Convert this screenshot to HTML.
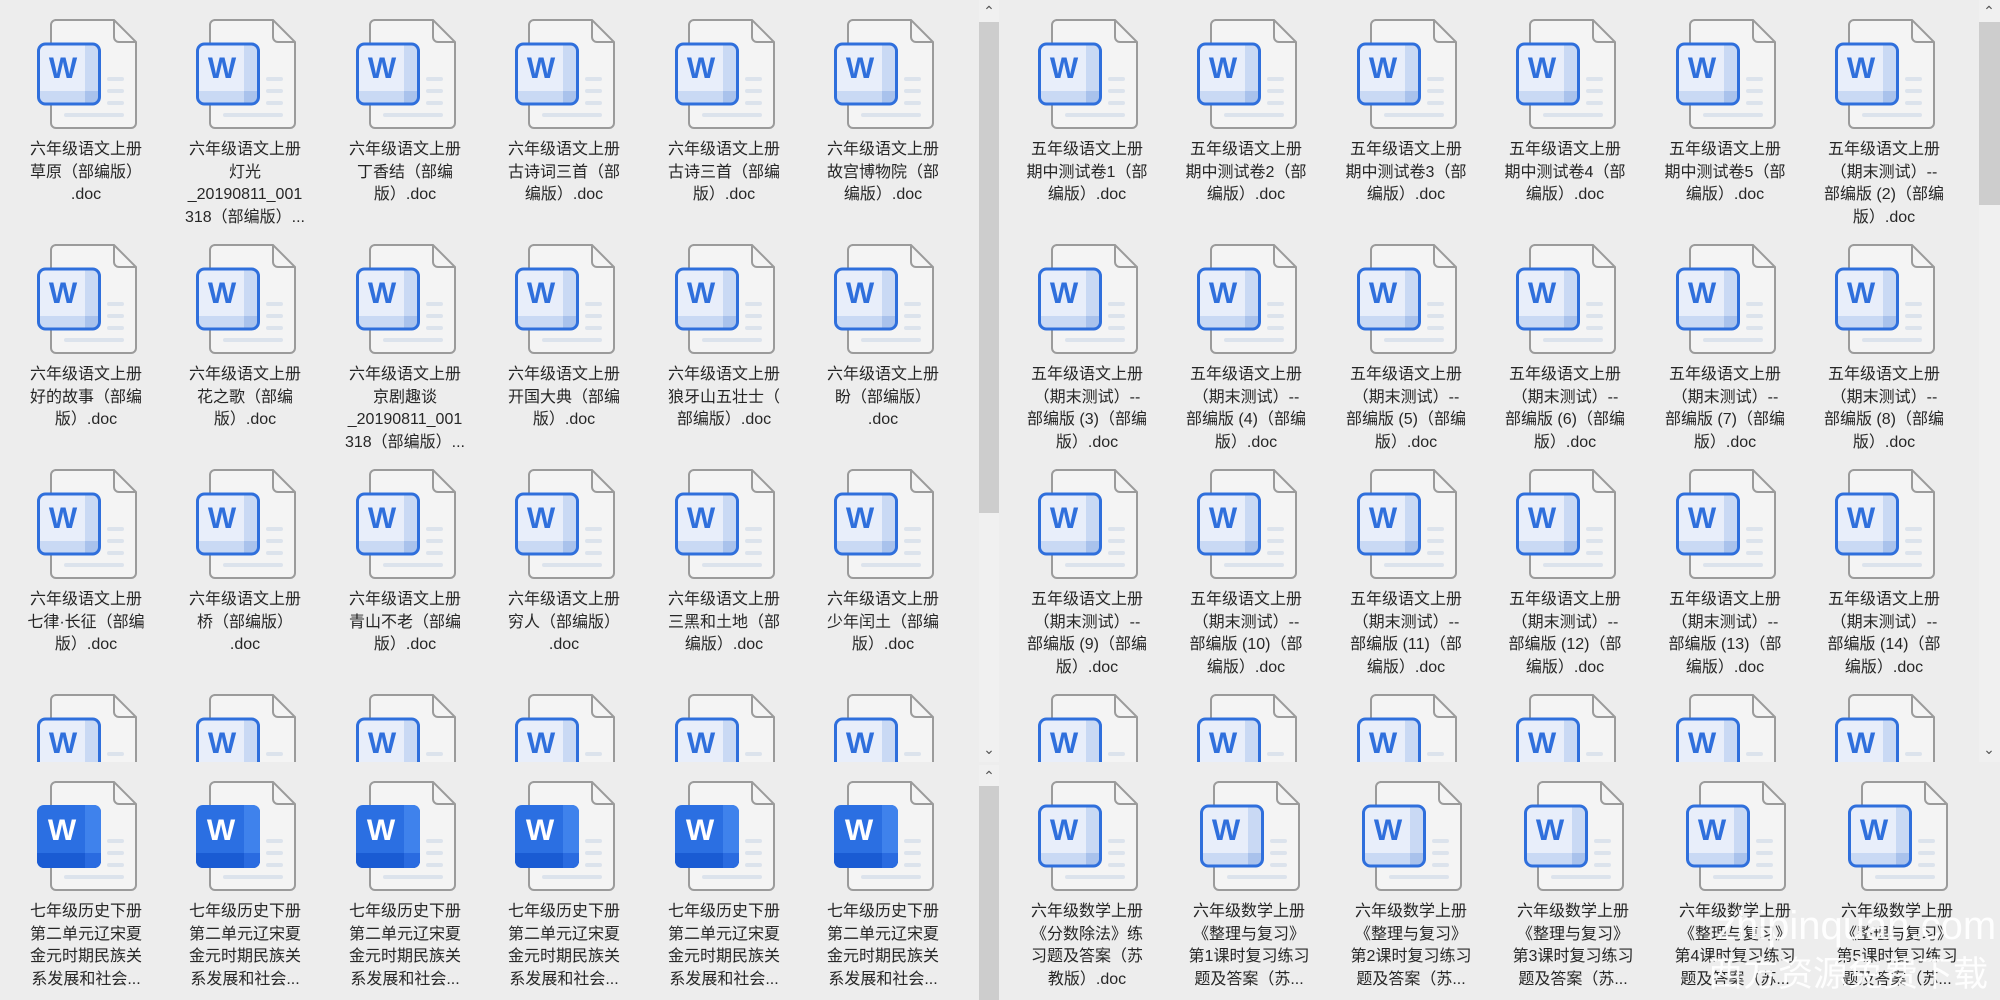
<!DOCTYPE html>
<html><head><meta charset="utf-8">
<style>
*{margin:0;padding:0;box-sizing:border-box}
body{width:2000px;height:1000px;background:#ededed;position:relative;overflow:hidden;font-family:"Liberation Sans","Noto Sans CJK SC",sans-serif}
.pane{position:absolute;overflow:hidden}
.it{position:absolute;width:150px;height:230px}
.it svg{position:absolute;left:26px;top:0;width:100px;height:110px}
.t{position:absolute;left:-5px;top:120px;width:160px;text-align:center;font-size:16px;line-height:22.5px;color:#262626;white-space:nowrap}
.sb{position:absolute;background:#f0f0f0;width:20px}
.th{position:absolute;left:0;width:20px;background:#cdcdcd}
.ar{position:absolute;left:0;width:20px;text-align:center;font-size:14px;color:#555;line-height:14px}
.wm{position:absolute;color:rgba(255,255,255,.9);white-space:nowrap;font-family:"Liberation Sans","Noto Sans CJK SC",sans-serif}
</style></head><body>
<svg width="0" height="0" style="position:absolute">
<defs>
<symbol id="pg" viewBox="0 0 100 110">
<path d="M18 1H77L99 23V104a5 5 0 0 1-5 5H19a5 5 0 0 1-5-5V6a5 5 0 0 1 5-5z" fill="#f4f4f4" stroke="#9b9b9b" stroke-width="2"/>
<path d="M77 1V18a5 5 0 0 0 5 5H99" fill="none" stroke="#9b9b9b" stroke-width="2"/>
<rect x="70" y="58" width="17" height="4" rx="2" fill="#dce3ec"/>
<rect x="70" y="70" width="17" height="4" rx="2" fill="#dce3ec"/>
<rect x="70" y="82" width="17" height="4" rx="2" fill="#dce3ec"/>
<rect x="27" y="94" width="60" height="4" rx="2" fill="#dce3ec"/>
</symbol>
<symbol id="wo" viewBox="0 0 100 110">
<use href="#pg"/>
<rect x="1.5" y="25" width="61" height="60" rx="7" fill="#e8eefa"/>
<path d="M48 26.5H56a5.5 5.5 0 0 1 5.5 5.5V78a5.5 5.5 0 0 1-5.5 5.5H48z" fill="#c9d9f4"/>
<path d="M3 72H61.5V78a5.5 5.5 0 0 1-5.5 5.5H8.5A5.5 5.5 0 0 1 3 78z" fill="#c9d9f4"/>
<path d="M48 72H61.5V78a5.5 5.5 0 0 1-5.5 5.5H48z" fill="#a9c2ec"/>
<rect x="1.5" y="25" width="61" height="60" rx="7" fill="none" stroke="#2f6fdc" stroke-width="3"/>
<text x="26" y="59" text-anchor="middle" font-family="Liberation Sans" font-weight="bold" font-size="30" fill="#2f6fdc">W</text>
</symbol>
<symbol id="wf" viewBox="0 0 100 110">
<use href="#pg"/>
<rect x="0" y="24" width="64" height="63" rx="7" fill="#2b6fe2"/>
<path d="M48 24H57a7 7 0 0 1 7 7V80a7 7 0 0 1-7 7H48z" fill="#3f82ec"/>
<path d="M0 72H64V80a7 7 0 0 1-7 7H7a7 7 0 0 1-7-7z" fill="#1a5bd3"/>
<path d="M48 72H64V80a7 7 0 0 1-7 7H48z" fill="#2a6be0"/>
<text x="25" y="59" text-anchor="middle" font-family="Liberation Sans" font-weight="bold" font-size="30" fill="#fff">W</text>
</symbol>
</defs></svg>

<div class="pane" style="left:0;top:0;width:978px;height:762px">
<div class="it" style="left:11px;top:19px"><svg><use href="#wo"/></svg><div class="t">六年级语文上册<br>草原（部编版）<br>.doc</div></div>
<div class="it" style="left:170px;top:19px"><svg><use href="#wo"/></svg><div class="t">六年级语文上册<br>灯光<br>_20190811_001<br>318（部编版）...</div></div>
<div class="it" style="left:330px;top:19px"><svg><use href="#wo"/></svg><div class="t">六年级语文上册<br>丁香结（部编<br>版）.doc</div></div>
<div class="it" style="left:489px;top:19px"><svg><use href="#wo"/></svg><div class="t">六年级语文上册<br>古诗词三首（部<br>编版）.doc</div></div>
<div class="it" style="left:649px;top:19px"><svg><use href="#wo"/></svg><div class="t">六年级语文上册<br>古诗三首（部编<br>版）.doc</div></div>
<div class="it" style="left:808px;top:19px"><svg><use href="#wo"/></svg><div class="t">六年级语文上册<br>故宫博物院（部<br>编版）.doc</div></div>

<div class="it" style="left:11px;top:244px"><svg><use href="#wo"/></svg><div class="t">六年级语文上册<br>好的故事（部编<br>版）.doc</div></div>
<div class="it" style="left:170px;top:244px"><svg><use href="#wo"/></svg><div class="t">六年级语文上册<br>花之歌（部编<br>版）.doc</div></div>
<div class="it" style="left:330px;top:244px"><svg><use href="#wo"/></svg><div class="t">六年级语文上册<br>京剧趣谈<br>_20190811_001<br>318（部编版）...</div></div>
<div class="it" style="left:489px;top:244px"><svg><use href="#wo"/></svg><div class="t">六年级语文上册<br>开国大典（部编<br>版）.doc</div></div>
<div class="it" style="left:649px;top:244px"><svg><use href="#wo"/></svg><div class="t">六年级语文上册<br>狼牙山五壮士（<br>部编版）.doc</div></div>
<div class="it" style="left:808px;top:244px"><svg><use href="#wo"/></svg><div class="t">六年级语文上册<br>盼（部编版）<br>.doc</div></div>

<div class="it" style="left:11px;top:469px"><svg><use href="#wo"/></svg><div class="t">六年级语文上册<br>七律·长征（部编<br>版）.doc</div></div>
<div class="it" style="left:170px;top:469px"><svg><use href="#wo"/></svg><div class="t">六年级语文上册<br>桥（部编版）<br>.doc</div></div>
<div class="it" style="left:330px;top:469px"><svg><use href="#wo"/></svg><div class="t">六年级语文上册<br>青山不老（部编<br>版）.doc</div></div>
<div class="it" style="left:489px;top:469px"><svg><use href="#wo"/></svg><div class="t">六年级语文上册<br>穷人（部编版）<br>.doc</div></div>
<div class="it" style="left:649px;top:469px"><svg><use href="#wo"/></svg><div class="t">六年级语文上册<br>三黑和土地（部<br>编版）.doc</div></div>
<div class="it" style="left:808px;top:469px"><svg><use href="#wo"/></svg><div class="t">六年级语文上册<br>少年闰土（部编<br>版）.doc</div></div>

<div class="it" style="left:11px;top:694px"><svg><use href="#wo"/></svg></div>
<div class="it" style="left:170px;top:694px"><svg><use href="#wo"/></svg></div>
<div class="it" style="left:330px;top:694px"><svg><use href="#wo"/></svg></div>
<div class="it" style="left:489px;top:694px"><svg><use href="#wo"/></svg></div>
<div class="it" style="left:649px;top:694px"><svg><use href="#wo"/></svg></div>
<div class="it" style="left:808px;top:694px"><svg><use href="#wo"/></svg></div>
</div>

<div class="pane" style="left:0;top:765px;width:978px;height:235px">
<div class="it" style="left:11px;top:16px"><svg><use href="#wf"/></svg><div class="t">七年级历史下册<br>第二单元辽宋夏<br>金元时期民族关<br>系发展和社会...</div></div>
<div class="it" style="left:170px;top:16px"><svg><use href="#wf"/></svg><div class="t">七年级历史下册<br>第二单元辽宋夏<br>金元时期民族关<br>系发展和社会...</div></div>
<div class="it" style="left:330px;top:16px"><svg><use href="#wf"/></svg><div class="t">七年级历史下册<br>第二单元辽宋夏<br>金元时期民族关<br>系发展和社会...</div></div>
<div class="it" style="left:489px;top:16px"><svg><use href="#wf"/></svg><div class="t">七年级历史下册<br>第二单元辽宋夏<br>金元时期民族关<br>系发展和社会...</div></div>
<div class="it" style="left:649px;top:16px"><svg><use href="#wf"/></svg><div class="t">七年级历史下册<br>第二单元辽宋夏<br>金元时期民族关<br>系发展和社会...</div></div>
<div class="it" style="left:808px;top:16px"><svg><use href="#wf"/></svg><div class="t">七年级历史下册<br>第二单元辽宋夏<br>金元时期民族关<br>系发展和社会...</div></div>
</div>

<div class="sb" style="left:979px;top:0;height:762px">
<div class="ar" style="top:4px">&#8963;</div>
<div class="th" style="top:22px;height:491px"></div>
<div class="ar" style="top:742px">&#8964;</div>
</div>
<div class="sb" style="left:979px;top:765px;height:235px">
<div class="ar" style="top:4px">&#8963;</div>
<div class="th" style="top:21px;height:214px"></div>
</div>

<div class="pane" style="left:1000px;top:0;width:978px;height:762px">
<div class="it" style="left:12px;top:19px"><svg><use href="#wo"/></svg><div class="t">五年级语文上册<br>期中测试卷1（部<br>编版）.doc</div></div>
<div class="it" style="left:171px;top:19px"><svg><use href="#wo"/></svg><div class="t">五年级语文上册<br>期中测试卷2（部<br>编版）.doc</div></div>
<div class="it" style="left:331px;top:19px"><svg><use href="#wo"/></svg><div class="t">五年级语文上册<br>期中测试卷3（部<br>编版）.doc</div></div>
<div class="it" style="left:490px;top:19px"><svg><use href="#wo"/></svg><div class="t">五年级语文上册<br>期中测试卷4（部<br>编版）.doc</div></div>
<div class="it" style="left:650px;top:19px"><svg><use href="#wo"/></svg><div class="t">五年级语文上册<br>期中测试卷5（部<br>编版）.doc</div></div>
<div class="it" style="left:809px;top:19px"><svg><use href="#wo"/></svg><div class="t">五年级语文上册<br>（期末测试）--<br>部编版 (2)（部编<br>版）.doc</div></div>

<div class="it" style="left:12px;top:244px"><svg><use href="#wo"/></svg><div class="t">五年级语文上册<br>（期末测试）--<br>部编版 (3)（部编<br>版）.doc</div></div>
<div class="it" style="left:171px;top:244px"><svg><use href="#wo"/></svg><div class="t">五年级语文上册<br>（期末测试）--<br>部编版 (4)（部编<br>版）.doc</div></div>
<div class="it" style="left:331px;top:244px"><svg><use href="#wo"/></svg><div class="t">五年级语文上册<br>（期末测试）--<br>部编版 (5)（部编<br>版）.doc</div></div>
<div class="it" style="left:490px;top:244px"><svg><use href="#wo"/></svg><div class="t">五年级语文上册<br>（期末测试）--<br>部编版 (6)（部编<br>版）.doc</div></div>
<div class="it" style="left:650px;top:244px"><svg><use href="#wo"/></svg><div class="t">五年级语文上册<br>（期末测试）--<br>部编版 (7)（部编<br>版）.doc</div></div>
<div class="it" style="left:809px;top:244px"><svg><use href="#wo"/></svg><div class="t">五年级语文上册<br>（期末测试）--<br>部编版 (8)（部编<br>版）.doc</div></div>

<div class="it" style="left:12px;top:469px"><svg><use href="#wo"/></svg><div class="t">五年级语文上册<br>（期末测试）--<br>部编版 (9)（部编<br>版）.doc</div></div>
<div class="it" style="left:171px;top:469px"><svg><use href="#wo"/></svg><div class="t">五年级语文上册<br>（期末测试）--<br>部编版 (10)（部<br>编版）.doc</div></div>
<div class="it" style="left:331px;top:469px"><svg><use href="#wo"/></svg><div class="t">五年级语文上册<br>（期末测试）--<br>部编版 (11)（部<br>编版）.doc</div></div>
<div class="it" style="left:490px;top:469px"><svg><use href="#wo"/></svg><div class="t">五年级语文上册<br>（期末测试）--<br>部编版 (12)（部<br>编版）.doc</div></div>
<div class="it" style="left:650px;top:469px"><svg><use href="#wo"/></svg><div class="t">五年级语文上册<br>（期末测试）--<br>部编版 (13)（部<br>编版）.doc</div></div>
<div class="it" style="left:809px;top:469px"><svg><use href="#wo"/></svg><div class="t">五年级语文上册<br>（期末测试）--<br>部编版 (14)（部<br>编版）.doc</div></div>

<div class="it" style="left:12px;top:694px"><svg><use href="#wo"/></svg></div>
<div class="it" style="left:171px;top:694px"><svg><use href="#wo"/></svg></div>
<div class="it" style="left:331px;top:694px"><svg><use href="#wo"/></svg></div>
<div class="it" style="left:490px;top:694px"><svg><use href="#wo"/></svg></div>
<div class="it" style="left:650px;top:694px"><svg><use href="#wo"/></svg></div>
<div class="it" style="left:809px;top:694px"><svg><use href="#wo"/></svg></div>
</div>

<div class="pane" style="left:1000px;top:765px;width:1000px;height:235px">
<div class="it" style="left:12px;top:16px"><svg><use href="#wo"/></svg><div class="t">六年级数学上册<br>《分数除法》练<br>习题及答案（苏<br>教版）.doc</div></div>
<div class="it" style="left:174px;top:16px"><svg><use href="#wo"/></svg><div class="t">六年级数学上册<br>《整理与复习》<br>第1课时复习练习<br>题及答案（苏...</div></div>
<div class="it" style="left:336px;top:16px"><svg><use href="#wo"/></svg><div class="t">六年级数学上册<br>《整理与复习》<br>第2课时复习练习<br>题及答案（苏...</div></div>
<div class="it" style="left:498px;top:16px"><svg><use href="#wo"/></svg><div class="t">六年级数学上册<br>《整理与复习》<br>第3课时复习练习<br>题及答案（苏...</div></div>
<div class="it" style="left:660px;top:16px"><svg><use href="#wo"/></svg><div class="t">六年级数学上册<br>《整理与复习》<br>第4课时复习练习<br>题及答案（苏...</div></div>
<div class="it" style="left:822px;top:16px"><svg><use href="#wo"/></svg><div class="t">六年级数学上册<br>《整理与复习》<br>第5课时复习练习<br>题及答案（苏...</div></div>
</div>

<div class="sb" style="left:1979px;top:0;height:762px;width:21px">
<div class="ar" style="top:4px">&#8963;</div>
<div class="th" style="top:22px;height:183px;width:21px"></div>
<div class="ar" style="top:742px">&#8964;</div>
</div>

<div class="wm" style="left:1716px;top:904px;font-size:40px">zhipinquan.com</div>
<div class="wm" style="left:1708px;top:946px;font-size:35px">西方资源免费下载</div>
</body></html>
